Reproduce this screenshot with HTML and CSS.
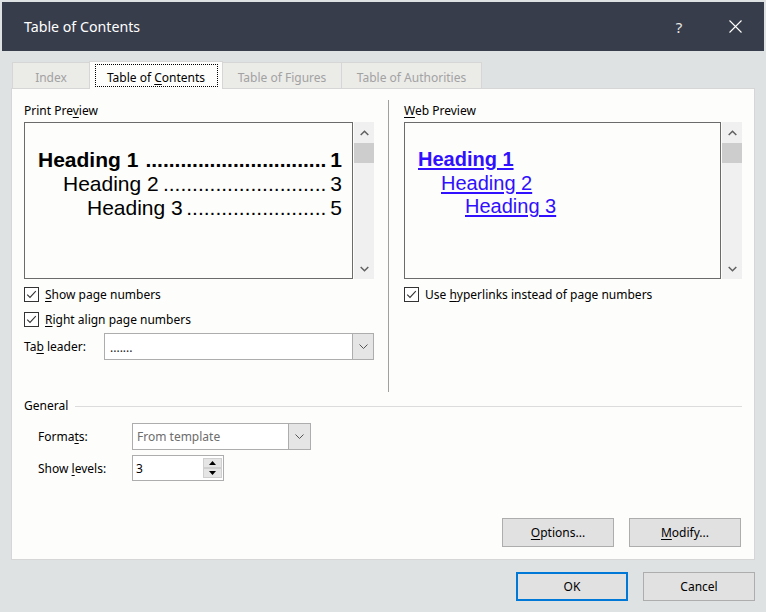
FILE: index.html
```html
<!DOCTYPE html>
<html>
<head>
<meta charset="utf-8">
<link rel="stylesheet" href="styles.css">
</head>
<body>
<div class="window">
  <div class="titlebar">
    <div class="title">Table of Contents</div>
    <div class="help">?</div>
    <div class="close"><svg width="13" height="13" viewBox="0 0 13 13"><path d="M0.5 0.5 L12.5 12.5 M12.5 0.5 L0.5 12.5" stroke="#ffffff" stroke-width="1.1" fill="none"/></svg></div>
  </div>

  <div class="tabs">
    <div class="tab t-index"><span>Index</span></div>
    <div class="tab t-toc active"><span class="focus"><span>Table of <u>C</u>ontents</span></span></div>
    <div class="tab t-fig"><span>Table of Figures</span></div>
    <div class="tab t-auth"><span>Table of Authorities</span></div>
  </div>

  <div class="panel">
    <div class="top">
      <div class="col left">
        <div class="label">Print Pre<u>v</u>iew</div>
        <div class="preview-row">
          <div class="preview print">
            <div class="toc-line lvl1"><span class="name">Heading 1</span><span class="leader">...............................</span><span class="num">1</span></div>
            <div class="toc-line lvl2"><span class="name">Heading 2</span><span class="leader">............................</span><span class="num">3</span></div>
            <div class="toc-line lvl3"><span class="name">Heading 3</span><span class="leader">........................</span><span class="num">5</span></div>
          </div>
          <div class="scrollbar">
            <div class="sb-arrow"><svg width="9" height="6" viewBox="0 0 9 6"><polyline points="0.7,5 4.5,1.2 8.3,5" fill="none" stroke="#606060" stroke-width="1.5"/></svg></div>
            <div class="thumb"></div>
            <div class="sb-space"></div>
            <div class="sb-arrow"><svg width="9" height="6" viewBox="0 0 9 6"><polyline points="0.7,1 4.5,4.8 8.3,1" fill="none" stroke="#606060" stroke-width="1.5"/></svg></div>
          </div>
        </div>
        <div class="check-row r1">
          <span class="checkbox"><svg width="13" height="13" viewBox="0 0 13 13"><polyline points="2.2,6.6 5,9.4 10.8,3.2" fill="none" stroke="#333" stroke-width="1.1"/></svg></span>
          <span><u>S</u>how page numbers</span>
        </div>
        <div class="check-row r2">
          <span class="checkbox"><svg width="13" height="13" viewBox="0 0 13 13"><polyline points="2.2,6.6 5,9.4 10.8,3.2" fill="none" stroke="#333" stroke-width="1.1"/></svg></span>
          <span><u>R</u>ight align page numbers</span>
        </div>
        <div class="leader-row">
          <span class="leader-label">Ta<u>b</u> leader:</span>
          <div class="select tab-select">
            <span class="select-text">.......</span>
            <span class="select-btn"><svg width="9" height="5" viewBox="0 0 9 5"><polyline points="0.5,0.5 4.5,4.5 8.5,0.5" fill="none" stroke="#555" stroke-width="1"/></svg></span>
          </div>
        </div>
      </div>

      <div class="divider"></div>

      <div class="col right">
        <div class="label"><u>W</u>eb Preview</div>
        <div class="preview-row">
          <div class="preview web">
            <div class="web-line lvl1"><span>Heading 1</span></div>
            <div class="web-line lvl2"><span>Heading 2</span></div>
            <div class="web-line lvl3"><span>Heading 3</span></div>
          </div>
          <div class="scrollbar">
            <div class="sb-arrow"><svg width="9" height="6" viewBox="0 0 9 6"><polyline points="0.7,5 4.5,1.2 8.3,5" fill="none" stroke="#606060" stroke-width="1.5"/></svg></div>
            <div class="thumb"></div>
            <div class="sb-space"></div>
            <div class="sb-arrow"><svg width="9" height="6" viewBox="0 0 9 6"><polyline points="0.7,1 4.5,4.8 8.3,1" fill="none" stroke="#606060" stroke-width="1.5"/></svg></div>
          </div>
        </div>
        <div class="check-row r1">
          <span class="checkbox"><svg width="13" height="13" viewBox="0 0 13 13"><polyline points="2.2,6.6 5,9.4 10.8,3.2" fill="none" stroke="#333" stroke-width="1.1"/></svg></span>
          <span>Use <u>h</u>yperlinks instead of page numbers</span>
        </div>
      </div>
    </div>

    <div class="general">
      <div class="general-head">
        <span>General</span>
        <span class="rule"></span>
      </div>
      <div class="form-row formats">
        <span class="form-label">Forma<u>t</u>s:</span>
        <div class="select fmt-select">
          <span class="select-text gray">From template</span>
          <span class="select-btn"><svg width="9" height="5" viewBox="0 0 9 5"><polyline points="0.5,0.5 4.5,4.5 8.5,0.5" fill="none" stroke="#555" stroke-width="1"/></svg></span>
        </div>
      </div>
      <div class="form-row levels">
        <span class="form-label">Show <u>l</u>evels:</span>
        <div class="spin">
          <span class="spin-text">3</span>
          <div class="spin-btns">
            <span class="spin-btn"><svg width="7" height="4" viewBox="0 0 7 4"><polygon points="0,4 3.5,0 7,4" fill="#000"/></svg></span>
            <span class="spin-btn"><svg width="7" height="4" viewBox="0 0 7 4"><polygon points="0,0 3.5,4 7,0" fill="#000"/></svg></span>
          </div>
        </div>
      </div>
    </div>

    <div class="panel-buttons">
      <div class="btn"><span><u>O</u>ptions...</span></div>
      <div class="btn"><span><u>M</u>odify...</span></div>
    </div>
  </div>

  <div class="footer">
    <div class="btn default">OK</div>
    <div class="btn">Cancel</div>
  </div>
</div>
</body>
</html>
```

FILE: styles.css
```css
* {
  box-sizing: border-box;
}

html, body {
  margin: 0;
  padding: 0;
}

body {
  width: 766px;
  height: 612px;
  overflow: hidden;
  background: #dfe2e3;
  font-family: "Noto Sans", sans-serif;
  font-size: 12px;
  color: #000;
}

u {
  text-underline-offset: 2px;
}

.window {
  width: 766px;
  height: 612px;
  padding-top: 2px;
  display: flex;
  flex-direction: column;
}

/* Title bar */
.titlebar {
  margin: 0 2px;
  height: 49px;
  background: #383d4b;
  color: #ffffff;
  display: flex;
  align-items: center;
}

.title {
  flex: 1;
  padding-left: 22px;
  font-size: 14.2px;
  padding-bottom: 1px;
}

.help {
  width: 12px;
  text-align: center;
  font-size: 15px;
  margin-right: 44px;
  color: #e8e8e8;
}

.close {
  width: 13px;
  height: 13px;
  margin-right: 22px;
  display: flex;
}

/* Tabs */
.tabs {
  display: flex;
  align-items: flex-end;
  height: 28px;
  margin: 10px 0 -1px 12px;
  position: relative;
  z-index: 2;
}

.tab {
  height: 26px;
  margin-bottom: 1px;
  margin-left: -1px;
  border: 1px solid #d6d6d6;
  border-bottom: none;
  background: #ebebe8;
  color: #a2a2a2;
  display: flex;
  align-items: center;
  justify-content: center;
  padding-top: 3px;
  white-space: nowrap;
}

.t-index {
  margin-left: 0;
  width: 78px;
}

.t-toc {
  width: 134px;
}

.t-fig {
  width: 120px;
}

.t-auth {
  width: 141px;
}

.tab.active {
  height: 28px;
  margin-bottom: 0;
  background: #fdfdfb;
  color: #000;
  position: relative;
  z-index: 1;
  align-items: flex-start;
  padding-top: 2px;
}

.focus {
  width: 123px;
  height: 23px;
  border: 1px dotted #000;
  display: flex;
  align-items: center;
  justify-content: center;
  padding-top: 3px;
}

/* Panel */
.panel {
  margin-left: 11px;
  width: 744px;
  height: 472px;
  border: 1px solid #d6d6d6;
  background: #fdfdfb;
  display: flex;
  flex-direction: column;
}

.top {
  display: flex;
  margin-top: 11px;
  padding-left: 12px;
  height: 292px;
}

.col.left {
  width: 350px;
}

.col.right {
  width: 338px;
  margin-left: 15px;
}

.divider {
  width: 1px;
  background: #a0a0a0;
  margin-left: 14px;
}

.label {
  margin-top: 2px;
  height: 16px;
  line-height: 16px;
  padding-top: 1px;
}

.preview-row {
  display: flex;
  margin-top: 4px;
  height: 157px;
}

.preview {
  border: 1px solid #6b6b6b;
  background: #fdfdfb;
  font-family: "Liberation Sans", Arial, sans-serif;
}

.preview.print {
  width: 329px;
  padding: 25px 10px 0 13px;
  font-size: 21px;
}

.preview.web {
  width: 317px;
  padding: 24px 10px 0 13px;
  font-size: 20px;
}

.toc-line {
  display: flex;
  height: 24px;
  line-height: 24px;
  white-space: nowrap;
}

.toc-line .name {
  flex: none;
}

.toc-line .leader {
  flex: 1;
  text-align: right;
  white-space: nowrap;
  margin-right: 4px;
}

.toc-line .num {
  flex: none;
}

.toc-line.lvl1 {
  font-weight: bold;
}

.toc-line.lvl2 {
  padding-left: 25px;
}

.toc-line.lvl3 {
  padding-left: 49px;
}

.web-line {
  height: 23.5px;
  line-height: 24px;
  color: #3010ff;
  white-space: nowrap;
}

.web-line span {
  text-decoration: underline;
  text-underline-offset: 2px;
}

.web-line.lvl1 {
  font-weight: bold;
}

.web-line.lvl1 span {
  text-decoration-thickness: 2px;
}

.web-line.lvl2 {
  padding-left: 23px;
}

.web-line.lvl3 {
  padding-left: 47px;
}

.scrollbar {
  width: 20px;
  margin-left: 1px;
  background: #f0f0f0;
  display: flex;
  flex-direction: column;
}

.sb-arrow {
  height: 21px;
  display: flex;
  align-items: center;
  justify-content: center;
}

.thumb {
  height: 20px;
  background: #cdcdcd;
}

.sb-space {
  flex: 1;
}

/* Checkboxes */
.check-row {
  display: flex;
  align-items: center;
  height: 16px;
  line-height: 16px;
  white-space: nowrap;
}

.check-row > span:last-child {
  padding-top: 1px;
}

.check-row.r1 {
  margin-top: 7px;
}

.check-row.r2 {
  margin-top: 9px;
}

.checkbox {
  width: 15px;
  height: 15px;
  border: 1px solid #333;
  background: #fff;
  margin-right: 6px;
  display: flex;
  flex: none;
}

/* Selects */
.leader-row {
  display: flex;
  align-items: center;
  margin-top: 6px;
  height: 27px;
}

.leader-label {
  width: 80px;
}

.select {
  height: 100%;
  border: 1px solid #adadad;
  background: #fff;
  display: flex;
  align-items: center;
}

.tab-select {
  width: 270px;
}

.select-text {
  flex: 1;
  padding-left: 5px;
  color: #222;
}

.tab-select .select-text {
  padding-top: 2px;
}

.select-text.gray {
  color: #6d6d6d;
  padding-left: 4px;
}

.select-btn {
  width: 21px;
  height: 100%;
  background: #e5e5e5;
  border-left: 1px solid #adadad;
  display: flex;
  align-items: center;
  justify-content: center;
}

/* General */
.general {
  margin-top: 6px;
  padding: 0 12px;
}

.general-head {
  display: flex;
  align-items: center;
  height: 16px;
  line-height: 16px;
}

.rule {
  flex: 1;
  height: 1px;
  background: #dcdcdc;
  margin-left: 7px;
}

.form-row {
  display: flex;
  align-items: center;
  padding-left: 14px;
}

.form-label {
  width: 94px;
}

.form-row.formats {
  margin-top: 9px;
  height: 27px;
}

.fmt-select {
  width: 179px;
}

.fmt-select .select-btn {
  width: 22px;
}

.form-row.levels {
  margin-top: 5px;
  height: 26px;
}

.spin {
  width: 92px;
  height: 100%;
  border: 1px solid #adadad;
  background: #fff;
  display: flex;
  align-items: center;
}

.spin-text {
  flex: 1;
  padding-left: 3px;
}

.spin-btns {
  width: 20px;
  height: 100%;
  padding: 2px 1px 2px 0;
  display: flex;
  flex-direction: column;
}

.spin-btn {
  flex: 1;
  background: #e5e5e5;
  border: 1px solid #cfcfcf;
  display: flex;
  align-items: center;
  justify-content: center;
}

/* Buttons */
.panel-buttons {
  margin-top: auto;
  display: flex;
  justify-content: flex-end;
  gap: 15px;
  padding: 0 13px 12px 0;
}

.btn {
  width: 112px;
  height: 29px;
  border: 1px solid #adadad;
  background: #e1e1e1;
  display: flex;
  align-items: center;
  justify-content: center;
}

.btn.default {
  border: 2px solid #0078d7;
}

.footer {
  display: flex;
  justify-content: flex-end;
  gap: 15px;
  margin-top: 12px;
  padding-right: 11px;
}
```
